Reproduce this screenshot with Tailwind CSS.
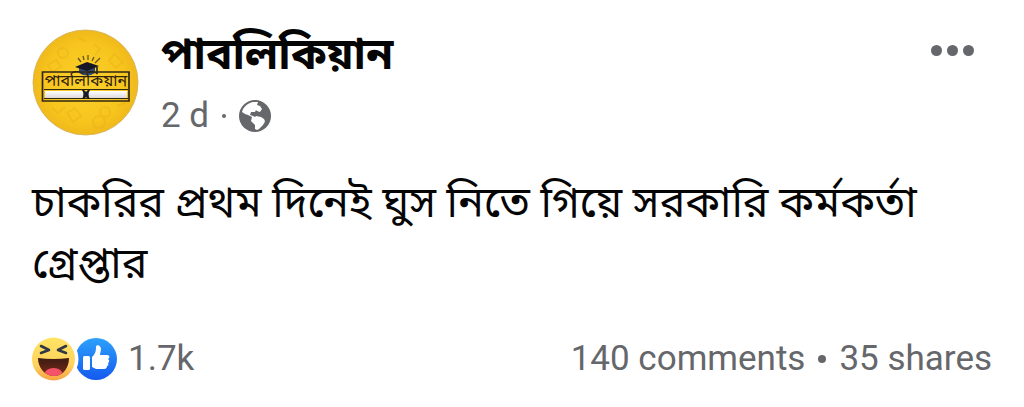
<!DOCTYPE html>
<html lang="bn">
<head>
<meta charset="utf-8">
<meta name="viewport" content="width=device-width, initial-scale=1">
<title>পাবলিকিয়ান</title>
<script src="https://cdn.jsdelivr.net/npm/@tailwindcss/browser@4"></script>
</head>
<body class="bg-white font-['Roboto','Noto_Sans_Bengali','Noto_Sans',sans-serif] text-[#050505]">
<article class="px-8 pt-7 pb-5">
  <header class="flex items-start">
    <a href="#" aria-label="পাবলিকিয়ান" class="mt-px shrink-0">
      <svg class="size-[107px]" viewBox="0 0 107 107">
        <defs>
          <radialGradient id="gold"><stop offset="0" stop-color="#fbd02b"/><stop offset=".75" stop-color="#f7c51d"/><stop offset="1" stop-color="#f0b91b"/></radialGradient>
          <linearGradient id="page" x2="0" y2="1"><stop offset="0" stop-color="#fff"/><stop offset="1" stop-color="#ded9dc"/></linearGradient>
        </defs>
        <circle cx="53.500" cy="53.500" r="52.500" fill="url(#gold)" stroke="#d9b763"/>
        <g fill="none" stroke="#e7ac18" stroke-width="2" opacity=".35">
          <circle cx="73" cy="83" r="5"/><circle cx="67" cy="93" r="6"/><circle cx="31" cy="24" r="5"/><path d="M16 36l8-5 5 7-9 5zM82 25l9 8-7 6-7-7zM35 84l8-5 6 8-8 6zM20 79l6 5 7-6M62 15l6 5-5 6M85 77l9-3M46 9l8 3"/>
        </g>
        <path d="M49 33l-3-4M52 31l-1-4M56 31v-5M60 32l2-4M63 34l5-5" stroke="#63551b" stroke-width="1.300"/>
        <path d="M47 38v6q8 5 16 0v-6z" fill="#2e4878"/>
        <path d="M43 38l12-5 12 4-12 5z" fill="#151724"/>
        <path d="M65 38v7" stroke="#151724" stroke-width="1.500"/>
        <path d="M10.500 43H97V72H10.500z" fill="none" stroke="#302817" stroke-width="1.700"/>
        <path d="M12 60.500h84M12 69.500h84" stroke="#302817"/>
        <path d="M13 62h37q4 3 0 7H13zM95 62H58q-4 3 0 7h37z" fill="url(#page)"/>
        <path d="M50 61h2l2 2 2-2h2q-3 4 0 9h-2l-2-2-2 2h-2q3-5 0-9z" fill="#171c2d"/>
        <text x="54" y="57" text-anchor="middle" class="font-['Noto_Sans_Bengali','Noto_Sans',sans-serif] text-[16px]" fill="#30220d">পাবলিকিয়ান</text>
      </svg>
    </a>
    <div class="ml-[22px] min-w-0 flex-1">
      <h1 class="text-[44px] leading-[52px] font-bold"><a href="#">পাবলিকিয়ান</a></h1>
      <div class="mt-[14px] flex items-center text-[35px] leading-[44px] text-[#65676b]">
        <span>2 d</span><span class="mx-[13px] size-1 rounded-full bg-[#65676b]"></span>
        <svg class="size-8" viewBox="0 0 32 32" role="img" aria-label="Public">
          <circle cx="16" cy="16" r="16" fill="#65676b"/>
          <path fill="#fff" d="M3 12C4 7 9 3 14 2l5 0-1 3 3 1 2 3-2 3-3-1-1-1-1 2-4 0-1 3 3 1 2 1 1-1 5 1 3 2c2 3 0 4-1 6l-4 4-2 1-2-1v-4l-4-4 1-4-4-2-3-1z"/>
        </svg>
      </div>
    </div>
    <button type="button" aria-label="More" class="mt-[17px] mr-[18px] flex gap-[5px] text-[#65676b]">
      <span class="size-[11px] rounded-full bg-current"></span><span class="size-[11px] rounded-full bg-current"></span><span class="size-[11px] rounded-full bg-current"></span>
    </button>
  </header>
  <p class="mt-[34px] text-[43px] leading-[61px]">চাকরির প্রথম দিনেই ঘুস নিতে গিয়ে সরকারি কর্মকর্তা গ্রেপ্তার</p>
  <footer class="mt-10 flex items-center justify-between text-[35px] leading-[48px] text-[#65676b]">
    <a href="#" class="flex items-center">
      <svg class="mr-[10px] h-11 w-[86px]" viewBox="0 0 86 44" role="img" aria-label="Haha, Like">
        <defs>
          <linearGradient id="face" x2="0" y2="1"><stop offset="0" stop-color="#ffe465"/><stop offset=".65" stop-color="#ffd25d"/><stop offset="1" stop-color="#f7a143"/></linearGradient>
          <linearGradient id="like" x2="0" y2="1"><stop offset="0" stop-color="#2da1fb"/><stop offset="1" stop-color="#1459ef"/></linearGradient>
          <linearGradient id="mouth" x2="0" y2="1"><stop offset="0" stop-color="#3c1b13"/><stop offset="1" stop-color="#782b19"/></linearGradient>
          <clipPath id="lips"><path d="M6 21q15 2 31 0c0 10-6 18-15 18S6 31 6 21z"/></clipPath>
        </defs>
        <circle cx="64" cy="22" r="21" fill="url(#like)"/>
        <circle cx="21.500" cy="22" r="25" fill="#fff"/>
        <circle cx="21.500" cy="22" r="21.500" fill="url(#face)"/>
        <path d="M6 21q15 2 31 0c0 10-6 18-15 18S6 31 6 21z" fill="url(#mouth)"/>
        <ellipse cx="21.500" cy="37" rx="9" ry="6" fill="#f35268" clip-path="url(#lips)"/>
        <path d="M9 9l8 4-8 3M34 9l-8 4 8 3" fill="none" stroke="#303847" stroke-width="2.600" stroke-linecap="round" stroke-linejoin="round"/>
        <rect x="51" y="19" width="7" height="14" rx="1.500" fill="#fff"/>
        <path d="M60 20c3-3 4-5 4-10 0-3 5-2 5 2 0 2-1 4-1 6h7c3 0 3 3 1 4 2 1 1 4 0 4 1 2 0 3-1 3 0 2-1 3-3 3h-8l-4-2z" fill="#fff"/>
      </svg>
      <span>1.7k</span>
    </a>
    <div class="flex items-center pt-px"><a href="#">140 comments</a><span class="mx-[13px] size-2 rounded-full bg-[#65676b]"></span><a href="#">35 shares</a></div>
  </footer>
</article>
</body>
</html>
